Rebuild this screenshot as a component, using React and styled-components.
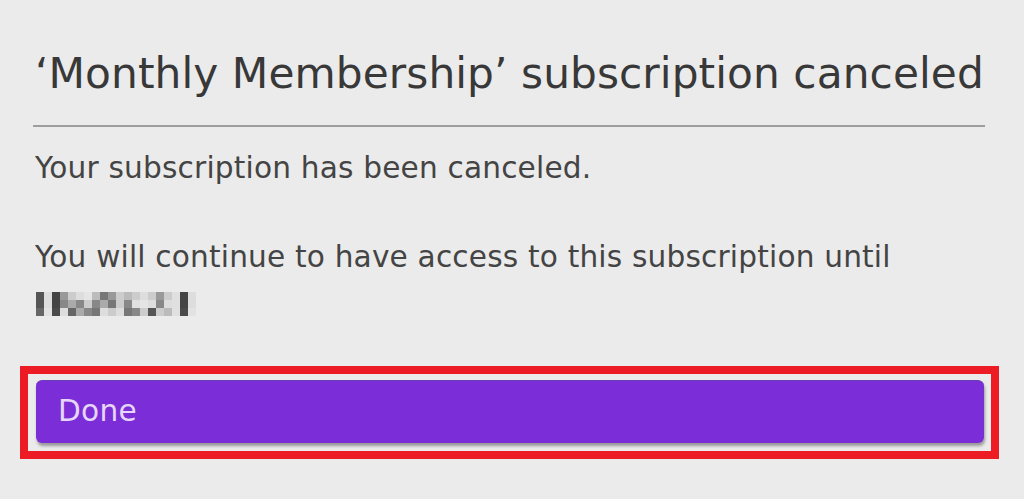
import styled, { createGlobalStyle } from "styled-components";

const GlobalStyle = createGlobalStyle`
  body {
    margin: 0;
    background: #ebebeb;
    font-family: "DejaVu Sans", Verdana, sans-serif;
  }
`;

const Page = styled.div`
  padding: 48.6px 25px 40px 20px;
`;

const Content = styled.div`
  padding: 0 14px 0 15px;
`;

const Title = styled.h1`
  margin: 0;
  font-size: 42.3px;
  line-height: 49px;
  font-weight: 400;
  letter-spacing: 0.07px;
  color: #383838;
  white-space: nowrap;
`;

const Divider = styled.hr`
  margin: 27px 0 0 -2px;
  border: none;
  height: 2px;
  background: #9d9d9d;
`;

const Message = styled.p`
  margin: ${(p) => (p.$first ? "19.5px" : "44.5px")} 0 0;
  font-size: 29.6px;
  line-height: 44.5px;
  letter-spacing: 0.18px;
  color: #444;
  white-space: nowrap;
`;

const Redacted = styled.div`
  display: grid;
  grid-template-columns: repeat(20, 8px);
  grid-auto-rows: 8px;
  margin-top: 12px;
  margin-left: 1px;
  width: 160px;
`;

const Cell = styled.span`
  background: ${(p) => p.$shade};
`;

const Highlight = styled.div`
  margin-top: 50px;
  border: 8px solid #ed1c24;
  padding: 6px 7px 8px 8px;
`;

const DoneButton = styled.button`
  display: block;
  width: 100%;
  height: 63px;
  margin: 0;
  padding: 0 0 0 22px;
  border: none;
  border-top: 1px solid #6b3fb4;
  border-radius: 6px;
  background: #7b2ed7;
  box-shadow: 1px 3px 3px rgba(0, 0, 0, 0.35);
  color: #e6d6f8;
  font-family: inherit;
  font-size: 29.6px;
  letter-spacing: 0.3px;
  line-height: 61px;
  text-align: left;
  cursor: pointer;
`;

// pixelated date, column by column (top, middle, bottom)
const blur = [
  ["#555", "#555", "#666"],
  ["#ddd", "#ddd", "#e2e2e2"],
  ["#444", "#444", "#4a4a4a"],
  ["#999", "#888", "#ddd"],
  ["#ccc", "#aaa", "#666"],
  ["#ddd", "#888", "#aaa"],
  ["#e5e5e5", "#ccc", "#888"],
  ["#bbb", "#888", "#777"],
  ["#777", "#aaa", "#ddd"],
  ["#999", "#777", "#ccc"],
  ["#ccc", "#ccc", "#ddd"],
  ["#bbb", "#888", "#777"],
  ["#ccc", "#e0e0e0", "#888"],
  ["#ddd", "#e5e5e5", "#ccc"],
  ["#ccc", "#ddd", "#555"],
  ["#999", "#888", "#ccc"],
  ["#ccc", "#ddd", "#bbb"],
  ["#e0e0e0", "#e0e0e0", "#e0e0e0"],
  ["#444", "#444", "#4a4a4a"],
  ["#ddd", "#ddd", "#e2e2e2"],
];

const App = () => (
  <>
    <GlobalStyle />
    <Page>
      <Content>
        <Title>‘Monthly Membership’ subscription canceled</Title>
        <Divider />
        <Message $first>Your subscription has been canceled.</Message>
        <Message>
          You will continue to have access to this subscription until
        </Message>
        <Redacted aria-label="date hidden">
          {[0, 1, 2].map((row) =>
            blur.map((col, i) => <Cell key={`${row}-${i}`} $shade={col[row]} />)
          )}
        </Redacted>
      </Content>
      <Highlight>
        <DoneButton>Done</DoneButton>
      </Highlight>
    </Page>
  </>
);

export default App;
